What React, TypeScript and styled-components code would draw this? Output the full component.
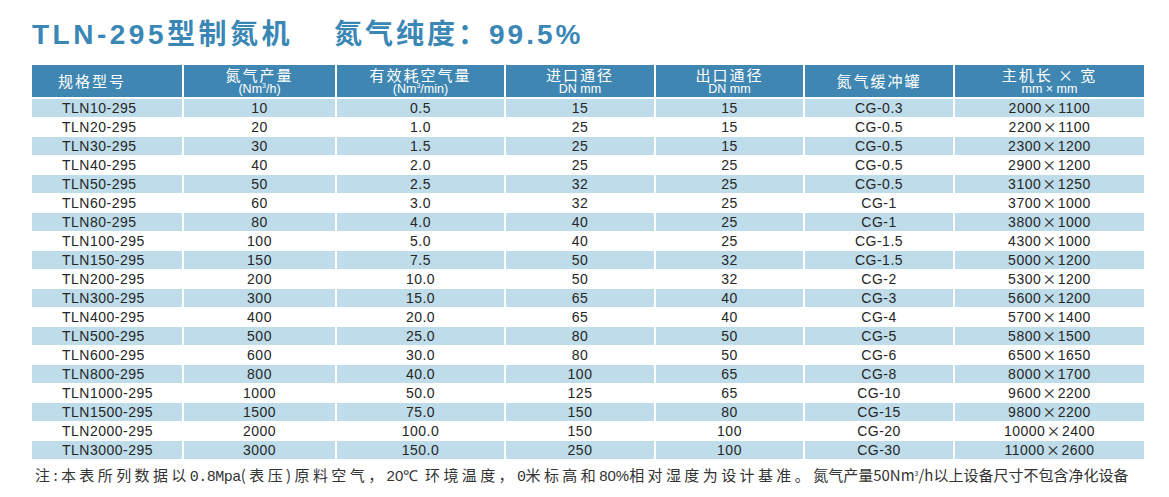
import React from "react";
import styled, { createGlobalStyle } from "styled-components";

const Global = createGlobalStyle`
  html, body { margin: 0; padding: 0; background: #fff; }
  body { font-family: "Liberation Sans", "Noto Sans CJK SC", sans-serif; }
`;

const Page = styled.div`
  width: 1169px;
  height: 497px;
  padding: 14px 0 0 32px;
  box-sizing: border-box;
  overflow: hidden;
`;

const Title = styled.h1`
  margin: 0;
  height: 36px;
  display: flex;
  align-items: center;
  gap: 41px;
  color: #3a87b6;
  font-family: "Liberation Sans", "Noto Sans CJK SC", sans-serif;
  font-weight: 700;
  font-size: 28px;
  white-space: nowrap;
`;

const TitlePart = styled.span<{ $spacing?: number }>`
  letter-spacing: ${(p) => p.$spacing ?? 3.5}px;
`;

const Table = styled.table`
  margin-top: 15px;
  width: 1112px;
  border-collapse: collapse;
  table-layout: fixed;
`;

const HeadCell = styled.th<{ $left?: boolean }>`
  height: 32px;
  padding: ${(p) => (p.$left ? "0 0 0 26px" : "0")};
  background: #3f87b2;
  color: #fff;
  border: 2px solid #fff;
  border-top: none;
  font-family: "Noto Sans CJK SC", "Liberation Sans", sans-serif;
  font-weight: 400;
  font-size: 15px;
  letter-spacing: 2px;
  text-align: ${(p) => (p.$left ? "left" : "center")};
  vertical-align: middle;
  line-height: 16px;
  &:first-child { border-left: none; }
  &:last-child { border-right: none; }
`;

const SubLine = styled.div`
  font-family: "Liberation Sans", sans-serif;
  font-size: 12.5px;
  letter-spacing: 0;
  line-height: 13px;
`;

const Sup = styled.sup`
  font-size: 7px;
  vertical-align: 5px;
  line-height: 0;
`;

const Row = styled.tr<{ $shaded: boolean }>`
  background: ${(p) => (p.$shaded ? "#bedcea" : "#fff")};
`;

const Cell = styled.td<{ $left?: boolean }>`
  height: 17px;
  padding: ${(p) => (p.$left ? "0 0 0 30px" : "0")};
  border: 2px solid #fff;
  border-top-width: 1px;
  border-bottom-width: 1px;
  color: #262626;
  font-family: "Liberation Sans", sans-serif;
  font-size: 14px;
  letter-spacing: 0.5px;
  line-height: 17px;
  text-align: ${(p) => (p.$left ? "left" : "center")};
  white-space: nowrap;
  &:first-child { border-left: none; }
  &:last-child { border-right: none; }
`;

const Times = styled.span`
  font-family: "Noto Sans CJK SC", sans-serif;
  font-size: 14px;
  margin: 0 1px;
`;

const Note = styled.p`
  margin: 5px 0 0 3px;
  color: #333;
  font-family: "Noto Sans CJK SC", "Liberation Sans", sans-serif;
  font-size: 15px;
  line-height: 20px;
  white-space: nowrap;
`;

const NoteWide = styled.span`
  letter-spacing: 3.4px;
`;

const NoteMono = styled.span`
  font-family: "Liberation Mono", monospace;
  font-size: 15px;
  letter-spacing: -0.5px;
`;

const NoteLatin = styled.span`
  font-family: "Liberation Sans", sans-serif;
  letter-spacing: 0;
`;

const NoteTight = styled.span`
  letter-spacing: 0;
`;

type Rec = [string, string, string, string, string, string, string, string];

const rows: Rec[] = [
  ["TLN10-295", "10", "0.5", "15", "15", "CG-0.3", "2000", "1100"],
  ["TLN20-295", "20", "1.0", "25", "15", "CG-0.5", "2200", "1100"],
  ["TLN30-295", "30", "1.5", "25", "15", "CG-0.5", "2300", "1200"],
  ["TLN40-295", "40", "2.0", "25", "25", "CG-0.5", "2900", "1200"],
  ["TLN50-295", "50", "2.5", "32", "25", "CG-0.5", "3100", "1250"],
  ["TLN60-295", "60", "3.0", "32", "25", "CG-1", "3700", "1000"],
  ["TLN80-295", "80", "4.0", "40", "25", "CG-1", "3800", "1000"],
  ["TLN100-295", "100", "5.0", "40", "25", "CG-1.5", "4300", "1000"],
  ["TLN150-295", "150", "7.5", "50", "32", "CG-1.5", "5000", "1200"],
  ["TLN200-295", "200", "10.0", "50", "32", "CG-2", "5300", "1200"],
  ["TLN300-295", "300", "15.0", "65", "40", "CG-3", "5600", "1200"],
  ["TLN400-295", "400", "20.0", "65", "40", "CG-4", "5700", "1400"],
  ["TLN500-295", "500", "25.0", "80", "50", "CG-5", "5800", "1500"],
  ["TLN600-295", "600", "30.0", "80", "50", "CG-6", "6500", "1650"],
  ["TLN800-295", "800", "40.0", "100", "65", "CG-8", "8000", "1700"],
  ["TLN1000-295", "1000", "50.0", "125", "65", "CG-10", "9600", "2200"],
  ["TLN1500-295", "1500", "75.0", "150", "80", "CG-15", "9800", "2200"],
  ["TLN2000-295", "2000", "100.0", "150", "100", "CG-20", "10000", "2400"],
  ["TLN3000-295", "3000", "150.0", "250", "100", "CG-30", "11000", "2600"],
];

const widths = [151, 153, 169, 150, 149, 150, 190];

export default function App() {
  return (
    <Page>
      <Global />
      <Title>
        <TitlePart>TLN-295型制氮机</TitlePart>
        <TitlePart $spacing={3}>氮气纯度：99.5%</TitlePart>
      </Title>
      <Table>
        <colgroup>
          {widths.map((w, i) => (
            <col key={i} style={{ width: w }} />
          ))}
        </colgroup>
        <thead>
          <tr>
            <HeadCell $left>规格型号</HeadCell>
            <HeadCell>
              氮气产量
              <SubLine>
                (Nm<Sup>3</Sup>/h)
              </SubLine>
            </HeadCell>
            <HeadCell>
              有效耗空气量
              <SubLine>
                (Nm<Sup>3</Sup>/min)
              </SubLine>
            </HeadCell>
            <HeadCell>
              进口通径
              <SubLine>DN mm</SubLine>
            </HeadCell>
            <HeadCell>
              出口通径
              <SubLine>DN mm</SubLine>
            </HeadCell>
            <HeadCell>氮气缓冲罐</HeadCell>
            <HeadCell>
              主机长 × 宽
              <SubLine>mm × mm</SubLine>
            </HeadCell>
          </tr>
        </thead>
        <tbody>
          {rows.map((r, i) => (
            <Row key={r[0]} $shaded={i % 2 === 0}>
              <Cell $left>{r[0]}</Cell>
              <Cell>{r[1]}</Cell>
              <Cell>{r[2]}</Cell>
              <Cell>{r[3]}</Cell>
              <Cell>{r[4]}</Cell>
              <Cell>{r[5]}</Cell>
              <Cell>
                {r[6]}
                <Times>×</Times>
                {r[7]}
              </Cell>
            </Row>
          ))}
        </tbody>
      </Table>
      <Note>
        <NoteWide>注:本表所列数据以</NoteWide>
        <NoteMono>0.8Mpa</NoteMono>
        <NoteWide>(表压)原料空气，</NoteWide>
        <NoteLatin>20℃</NoteLatin>
        <NoteWide> 环境温度，</NoteWide>
        <NoteMono>0</NoteMono>
        <NoteWide>米标高和</NoteWide>
        <NoteLatin>80%</NoteLatin>
        <NoteWide>相对湿度为设计基准。</NoteWide>
        <NoteTight>
          氮气产量50Nm<Sup>3</Sup>/h以上设备尺寸不包含净化设备
        </NoteTight>
      </Note>
    </Page>
  );
}
